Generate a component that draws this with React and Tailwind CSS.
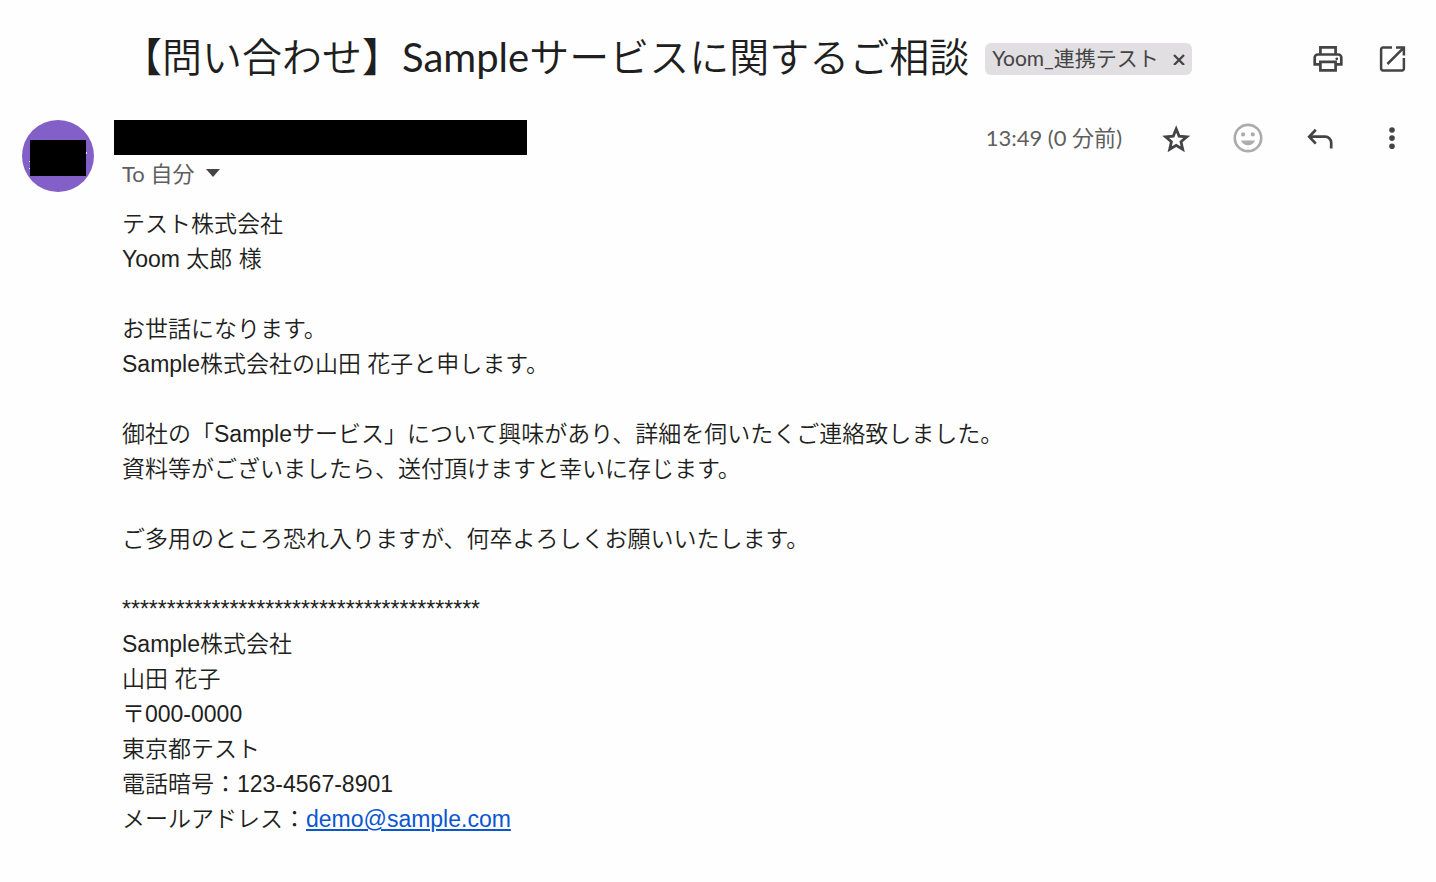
const messageLines = [
  "テスト株式会社",
  "Yoom 太郎 様",
  "",
  "お世話になります。",
  "Sample株式会社の山田 花子と申します。",
  "",
  "御社の「Sampleサービス」について興味があり、詳細を伺いたくご連絡致しました。",
  "資料等がございましたら、送付頂けますと幸いに存じます。",
  "",
  "ご多用のところ恐れ入りますが、何卒よろしくお願いいたします。",
  "",
  "****************************************",
  "Sample株式会社",
  "山田 花子",
  "〒000-0000",
  "東京都テスト",
  "電話暗号：123-4567-8901",
];

const PrintIcon = () => (
  <svg className="w-10 h-10" viewBox="0 0 40 40" fill="none" stroke="currentColor" strokeWidth="2.7">
    <path d="M12.4 15.5V8.4h15.2v7.1" />
    <path d="M12.4 25.4H6.7v-6.9a3 3 0 0 1 3-3h20.6a3 3 0 0 1 3 3v6.9h-5.7" />
    <path d="M12.4 22.9h15.2v8.4H12.4z" />
    <circle cx="28.8" cy="19.8" r="1.4" fill="currentColor" stroke="none" />
  </svg>
);

const OpenIcon = () => (
  <svg className="w-10 h-10" viewBox="0 0 40 40" fill="none" stroke="currentColor" strokeWidth="2.5">
    <path d="M20 8.6h-9.1a1.8 1.8 0 0 0-1.8 1.8v19.2a1.8 1.8 0 0 0 1.8 1.8h19.2a1.8 1.8 0 0 0 1.8-1.8V19" />
    <path d="M24 8.6h7.9v7.9M31.6 8.9 15.4 25" />
  </svg>
);

const StarIcon = () => (
  <svg className="w-10 h-10" viewBox="0 0 40 40" fill="none" stroke="currentColor" strokeWidth="2.8">
    <path d="M20.2 11 23.1 18.1 30.8 18.8 25 23.8 26.7 31.3 20.2 27.3 13.7 31.3 15.4 23.8 9.6 18.8 17.3 18.1z" />
  </svg>
);

const SmileIcon = () => (
  <svg className="w-10 h-10" viewBox="0 0 40 40" fill="currentColor">
    <circle cx="20" cy="20" r="13.2" fill="none" stroke="currentColor" strokeWidth="2.7" />
    <circle cx="15.1" cy="16.4" r="2.1" />
    <circle cx="24.8" cy="16.4" r="2.1" />
    <path d="M13 22.4h14c-1.1 3-3.8 4.9-7 4.9s-5.9-1.9-7-4.9z" />
  </svg>
);

const ReplyIcon = () => (
  <svg className="w-10 h-10" viewBox="0 0 40 40" fill="none" stroke="currentColor" strokeWidth="2.7">
    <path d="M15.8 11.8 9.2 18.7l6.6 6.9" />
    <path d="M9.4 18.7h15.8a6 6 0 0 1 6 6v5.7" />
  </svg>
);

const MoreIcon = () => (
  <svg className="w-10 h-10" viewBox="0 0 40 40" fill="currentColor">
    <circle cx="20" cy="12" r="2.8" />
    <circle cx="20" cy="20.1" r="2.8" />
    <circle cx="20" cy="28.3" r="2.8" />
  </svg>
);

const Avatar = () => (
  <svg className="w-[72px] h-[72px] shrink-0" viewBox="0 0 72 72" aria-hidden="true">
    <circle cx="36" cy="36" r="36" fill="#835fc8" />
    <path d="M7 41h1v1H7zM7 48h1v1H7zM63 32h2v2H63z" fill="#f1ecfa" />
    <path d="M8 20h56v36H8z" fill="#000" />
  </svg>
);

const IconButton = ({ label, children }) => (
  <button
    type="button"
    aria-label={label}
    className="w-10 h-10 flex items-center justify-center rounded-full text-[#444446] hover:bg-gray-100"
  >
    {children}
  </button>
);

const Header = () => (
  <header className="flex items-center pl-[122px] pr-6 pt-[39px]">
    <h1 className="text-[40px] leading-9 pb-1 font-[350] text-[#1f1f21] whitespace-nowrap">
      【問い合わせ】<span className="font-normal">Sample</span>サービスに関するご相談
    </h1>
    <div className="ml-4 flex items-center h-8 rounded-md bg-[#e1dfe1] px-[7px] text-[21px] text-[#444446] whitespace-nowrap">
      <span className="pb-[2px]">Yoom_連携テスト</span>
      <button type="button" aria-label="ラベルを削除" className="ml-[14px]">
        <svg className="w-3 h-3" viewBox="0 0 12 12" fill="none" stroke="currentColor" strokeWidth="2.3">
          <path d="M1 2l10 10M11 2 1 12" />
        </svg>
      </button>
    </div>
    <div className="ml-auto flex gap-6">
      <IconButton label="印刷">
        <PrintIcon />
      </IconButton>
      <IconButton label="新しいウィンドウ">
        <OpenIcon />
      </IconButton>
    </div>
  </header>
);

const Sender = () => (
  <section className="flex pl-[22px] pr-6 pt-[41px]">
    <Avatar />
    <div className="ml-5">
      <div className="w-[413px] h-[35px] bg-black" />
      <button
        type="button"
        className="ml-2 flex items-center h-9 gap-3 text-[22px] text-[#5e5e60]"
      >
        To 自分
        <svg className="w-[14px] h-2" viewBox="0 0 14 8" fill="#444446">
          <path d="M0 0h14L7 8z" />
        </svg>
      </button>
    </div>
    <div className="ml-auto flex items-center h-9">
      <time className="mr-[34px] pb-[2px] text-[22px] text-[#5e5e60] whitespace-nowrap">13:49 (0 分前)</time>
      <div className="flex gap-8">
        <IconButton label="スター">
          <StarIcon />
        </IconButton>
        <button
          type="button"
          aria-label="リアクション"
          className="w-10 h-10 rounded-full text-[#acacae]"
        >
          <SmileIcon />
        </button>
        <IconButton label="返信">
          <ReplyIcon />
        </IconButton>
        <IconButton label="その他">
          <MoreIcon />
        </IconButton>
      </div>
    </div>
  </section>
);

const Message = () => (
  <article className="pl-[122px] pr-6 pt-[15px] pb-10 text-[23px] leading-[35px] font-[350] text-[#1f1f21] font-['Liberation_Sans','Noto_Sans_CJK_JP',sans-serif]">
    {messageLines.map((line, i) => (
      <p key={i} className="min-h-[35px]">
        {line}
      </p>
    ))}
    <p>
      メールアドレス：
      <a href="mailto:demo@sample.com" className="text-[#0b57d0] underline">
        demo@sample.com
      </a>
    </p>
  </article>
);

export default function App() {
  return (
    <main
      lang="ja"
      className="min-h-screen bg-[#fefefe] font-[Lato,'Noto_Sans_CJK_JP',sans-serif]"
    >
      <Header />
      <Sender />
      <Message />
    </main>
  );
}
